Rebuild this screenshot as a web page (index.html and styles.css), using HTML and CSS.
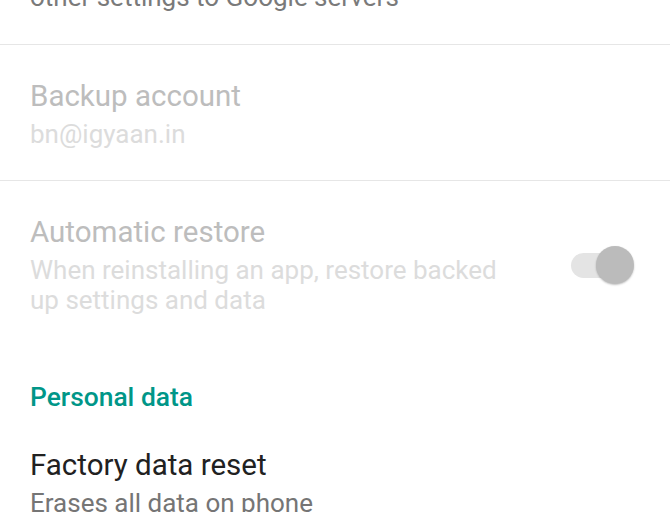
FILE: index.html
```html
<!DOCTYPE html>
<html>
<head>
<meta charset="utf-8">
<link rel="stylesheet" href="styles.css">
</head>
<body>
<div class="list">
  <div class="item first">
    <div class="text">
      <div class="summary prev">other settings to Google servers</div>
    </div>
  </div>
  <div class="item divided">
    <div class="text">
      <div class="title disabled">Backup account</div>
      <div class="summary disabled">bn@igyaan.in</div>
    </div>
  </div>
  <div class="item divided row">
    <div class="text">
      <div class="title disabled">Automatic restore</div>
      <div class="summary disabled narrow">When reinstalling an app, restore backed up settings and data</div>
    </div>
    <div class="switch">
      <div class="track"></div>
      <div class="thumb"></div>
    </div>
  </div>
  <div class="category">Personal data</div>
  <div class="item last">
    <div class="text">
      <div class="title">Factory data reset</div>
      <div class="summary">Erases all data on phone</div>
    </div>
  </div>
</div>
</body>
</html>
```
FILE: styles.css
```css
html, body {
  margin: 0;
  padding: 0;
  background: #ffffff;
  overflow: hidden;
}
body {
  font-family: Roboto, "Liberation Sans", sans-serif;
  width: 670px;
  height: 512px;
}
.list {
  margin-top: -18px;
}
.item {
  padding: 33px 36px 31px 30px;
}
.item.first {
  padding-top: 0;
  padding-bottom: 32px;
}
.item.divided {
  border-top: 1px solid #e6e6e6;
}
.item.row {
  padding-bottom: 0;
}
.item.last {
  padding-top: 35px;
}
.row {
  display: flex;
  align-items: center;
  gap: 50px;
}
.text {
  flex: 1;
  min-width: 0;
}
.title {
  font-size: 29.5px;
  line-height: 36px;
  color: #212121;
}
.summary {
  font-size: 26px;
  line-height: 30px;
  margin-top: 5px;
  color: #757575;
}
.summary.narrow {
  margin-top: 5px;
}
.summary.prev {
  margin-top: 0;
  color: #7a7a7a;
}
.item.last .summary {
  margin-top: 5px;
}
.title.disabled {
  color: #bdbdbd;
}
.summary.disabled {
  color: #dcdcdc;
}
.category {
  padding: 67px 30px 0 30px;
  font-size: 26.4px;
  line-height: 30px;
  font-weight: 500;
  color: #009688;
}
.switch {
  position: relative;
  width: 64px;
  height: 38px;
  flex: none;
}
.track {
  position: absolute;
  left: 1px;
  top: 7px;
  width: 58px;
  height: 25px;
  border-radius: 13px;
  background: #e4e4e4;
}
.thumb {
  position: absolute;
  left: 26px;
  top: 0;
  width: 38px;
  height: 38px;
  border-radius: 50%;
  background: #bbbbbb;
  box-shadow: 0 1px 2px rgba(0,0,0,0.25);
}
```
